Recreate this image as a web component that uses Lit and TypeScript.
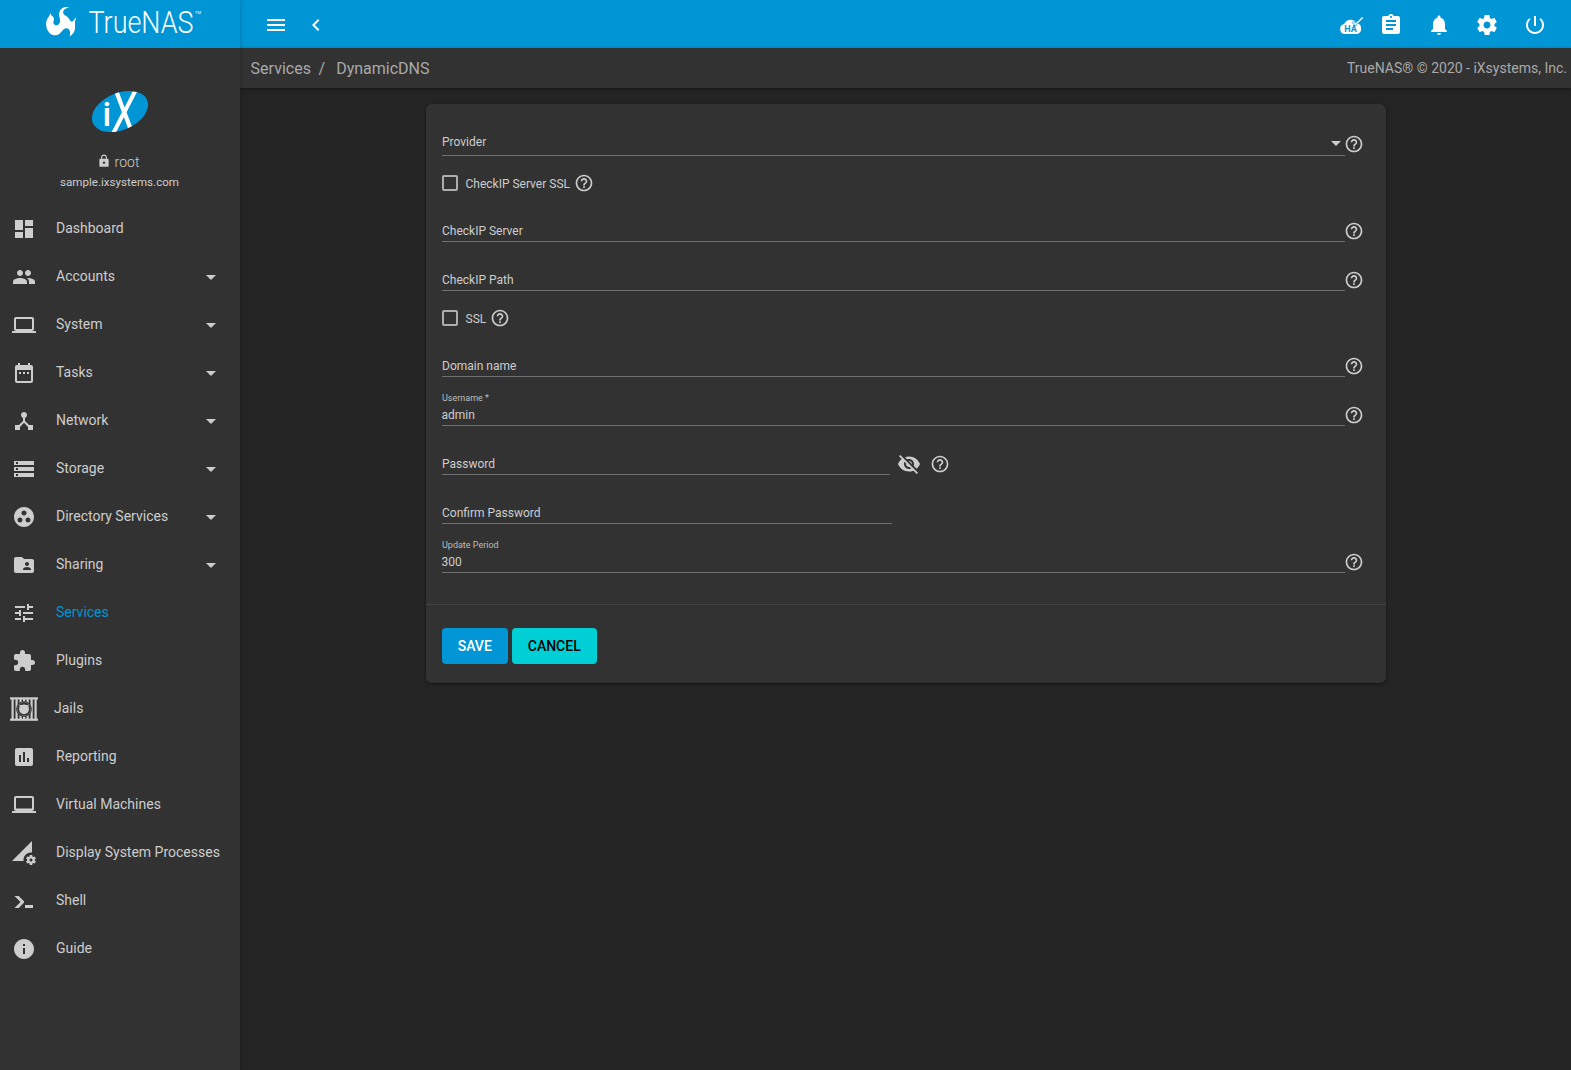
import { LitElement, html, css, svg, nothing } from "lit";
import { customElement, property } from "lit/decorators.js";
import { classMap } from "lit/directives/class-map.js";

const ICONS: Record<string, string> = {
  menu: "M3 18h18v-2H3v2zm0-5h18v-2H3v2zm0-7v2h18V6H3z",
  chevronLeft: "M15.41 7.41L14 6l-6 6 6 6 1.41-1.41L10.83 12z",
  assignment:
    "M19 3h-4.18C14.4 1.84 13.3 1 12 1c-1.3 0-2.4.84-2.82 2H5c-1.1 0-2 .9-2 2v14c0 1.1.9 2 2 2h14c1.1 0 2-.9 2-2V5c0-1.1-.9-2-2-2zm-7 0c.55 0 1 .45 1 1s-.45 1-1 1-1-.45-1-1 .45-1 1-1zm2 14H7v-2h7v2zm3-4H7v-2h10v2zm0-4H7V7h10v2z",
  bell: "M12 22c1.1 0 2-.9 2-2h-4c0 1.1.89 2 2 2zm6-6v-5c0-3.07-1.64-5.64-4.5-6.32V4c0-.83-.67-1.5-1.5-1.5s-1.5.67-1.5 1.5v.68C7.63 5.36 6 7.92 6 11v5l-2 2v1h16v-1l-2-2z",
  settings:
    "M19.43 12.98c.04-.32.07-.64.07-.98s-.03-.66-.07-.98l2.11-1.65c.19-.15.24-.42.12-.64l-2-3.46c-.12-.22-.39-.3-.61-.22l-2.49 1c-.52-.4-1.08-.73-1.69-.98l-.38-2.65C14.46 2.18 14.25 2 14 2h-4c-.25 0-.46.18-.49.42l-.38 2.65c-.61.25-1.17.59-1.69.98l-2.49-1c-.23-.09-.49 0-.61.22l-2 3.46c-.13.22-.07.49.12.64l2.11 1.65c-.04.32-.07.65-.07.98s.03.66.07.98l-2.11 1.65c-.19.15-.24.42-.12.64l2 3.46c.12.22.39.3.61.22l2.49-1c.52.4 1.08.73 1.69.98l.38 2.65c.03.24.24.42.49.42h4c.25 0 .46-.18.49-.42l.38-2.65c.61-.25 1.17-.59 1.69-.98l2.49 1c.23.09.49 0 .61-.22l2-3.46c.12-.22.07-.49-.12-.64l-2.11-1.65zM12 15.5c-1.93 0-3.5-1.57-3.5-3.5s1.57-3.5 3.5-3.5 3.5 1.57 3.5 3.5-1.57 3.5-3.5 3.5z",
  power:
    "M13 3h-2v10h2V3zm4.83 2.17l-1.42 1.42C17.99 7.86 19 9.81 19 12c0 3.87-3.13 7-7 7s-7-3.13-7-7c0-2.19 1.01-4.14 2.58-5.42L6.17 5.17C4.23 6.82 3 9.26 3 12c0 4.97 4.03 9 9 9s9-4.03 9-9c0-2.74-1.23-5.18-3.17-6.83z",
  dashboard: "M3 13h8V3H3v10zm0 8h8v-6H3v6zm10 0h8V11h-8v10zm0-18v6h8V3h-8z",
  group:
    "M16 11c1.66 0 2.99-1.34 2.99-3S17.66 5 16 5c-1.66 0-3 1.34-3 3s1.34 3 3 3zm-8 0c1.66 0 2.99-1.34 2.99-3S9.66 5 8 5C6.34 5 5 6.34 5 8s1.34 3 3 3zm0 2c-2.33 0-7 1.17-7 3.5V19h14v-2.5c0-2.33-4.67-3.5-7-3.5zm8 0c-.29 0-.62.02-.97.05 1.16.84 1.97 1.97 1.97 3.45V19h6v-2.5c0-2.33-4.67-3.5-7-3.5z",
  laptop:
    "M20 18c1.1 0 1.99-.9 1.99-2L22 6c0-1.1-.9-2-2-2H4c-1.1 0-2 .9-2 2v10c0 1.1.9 2 2 2H0v2h24v-2h-4zM4 6h16v10H4V6z",
  dateRange:
    "M9 11H7v2h2v-2zm4 0h-2v2h2v-2zm4 0h-2v2h2v-2zm2-7h-1V2h-2v2H8V2H6v2H5c-1.11 0-1.99.9-1.99 2L3 20c0 1.1.89 2 2 2h14c1.1 0 2-.9 2-2V6c0-1.1-.9-2-2-2zm0 16H5V9h14v11z",
  hub: "M17 16l-4-4V8.82C14.16 8.4 15 7.3 15 6c0-1.66-1.34-3-3-3S9 4.34 9 6c0 1.3.84 2.4 2 2.82V12l-4 4H3v5h5v-3.05l4-4.2 4 4.2V21h5v-5h-4z",
  storage: "M2 20h20v-4H2v4zm2-3h2v2H4v-2zM2 4v4h20V4H2zm4 3H4V5h2v2zm-4 7h20v-4H2v4zm2-3h2v2H4v-2z",
  groupWork:
    "M12 2C6.48 2 2 6.48 2 12s4.48 10 10 10 10-4.48 10-10S17.52 2 12 2zM8 17.5c-1.38 0-2.5-1.12-2.5-2.5s1.12-2.5 2.5-2.5 2.5 1.12 2.5 2.5-1.12 2.5-2.5 2.5zM9.5 8c0-1.38 1.12-2.5 2.5-2.5s2.5 1.12 2.5 2.5-1.12 2.5-2.5 2.5S9.5 9.38 9.5 8zm6.5 9.5c-1.38 0-2.5-1.12-2.5-2.5s1.12-2.5 2.5-2.5 2.5 1.12 2.5 2.5-1.12 2.5-2.5 2.5z",
  folderShared:
    "M20 6h-8l-2-2H4c-1.1 0-1.99.9-1.99 2L2 18c0 1.1.9 2 2 2h16c1.1 0 2-.9 2-2V8c0-1.1-.9-2-2-2zm-5 3c1.1 0 2 .9 2 2s-.9 2-2 2-2-.9-2-2 .9-2 2-2zm4 8h-8v-1c0-1.33 2.67-2 4-2s4 .67 4 2v1z",
  tune: "M3 17v2h6v-2H3zM3 5v2h10V5H3zm10 16v-2h8v-2h-8v-2h-2v6h2zM7 9v2H3v2h4v2h2V9H7zm14 4v-2H11v2h10zm-6-4h2V7h4V5h-4V3h-2v6z",
  extension:
    "M20.5 11H19V7c0-1.1-.9-2-2-2h-4V3.5C13 2.12 11.88 1 10.5 1S8 2.12 8 3.5V5H4c-1.1 0-1.99.9-1.99 2v3.8H3.5c1.49 0 2.7 1.21 2.7 2.7s-1.21 2.7-2.7 2.7H2V20c0 1.1.9 2 2 2h3.8v-1.5c0-1.49 1.21-2.7 2.7-2.7 1.49 0 2.7 1.21 2.7 2.7V22H17c1.1 0 2-.9 2-2v-4h1.5c1.38 0 2.5-1.12 2.5-2.5S21.88 11 20.5 11z",
  chart:
    "M19 3H5c-1.1 0-2 .9-2 2v14c0 1.1.9 2 2 2h14c1.1 0 2-.9 2-2V5c0-1.1-.9-2-2-2zM9 17H7v-7h2v7zm4 0h-2V7h2v10zm4 0h-2v-4h2v4z",
  computer:
    "M20 18c1.1 0 2-.9 2-2V5c0-1.1-.9-2-2-2H4c-1.1 0-2 .9-2 2v11c0 1.1.9 2 2 2H0v2h24v-2h-4zM4 5h16v10.500H4V5z",
  dataSetting:
    "M18.99 11.5c.34 0 .67.03 1 .07L20 0 0 20h11.560c-.04-.33-.07-.66-.07-1 0-4.14 3.36-7.5 7.5-7.5zm3.710 7.990c.02-.16.04-.32.04-.49 0-.17-.01-.33-.04-.49l1.060-.83c.09-.08.12-.21.06-.32l-1-1.730c-.06-.11-.19-.15-.31-.11l-1.240.5c-.26-.2-.54-.37-.85-.49l-.19-1.320c-.01-.12-.12-.21-.24-.21h-2c-.12 0-.23.09-.25.21l-.19 1.320c-.3.13-.59.29-.85.49l-1.240-.5c-.11-.04-.24 0-.31.11l-1 1.730c-.06.11-.04.24.06.32l1.060.83c-.02.16-.03.32-.03.49 0 .17.01.33.03.49l-1.060.83c-.09.08-.12.21-.06.32l1 1.730c.06.11.19.15.31.11l1.240-.5c.26.2.54.37.85.49l.19 1.320c.02.12.12.21.25.21h2c.12 0 .23-.09.24-.21l.19-1.320c.3-.13.59-.29.84-.49l1.250.5c.11.04.24 0 .31-.11l1-1.730c.06-.11.03-.24-.06-.32l-1.070-.83zm-3.710 1.010c-.83 0-1.500-.67-1.500-1.500s.67-1.500 1.500-1.500 1.500.67 1.500 1.500-.67 1.500-1.500 1.500z",
  shell: "M13 19v-3h8v3h-8zM8.500 13L2.470 7h4.240l4.960 4.960c.58.58.58 1.540 0 2.120L6.740 19H2.500l6-6z",
  info: "M12 2C6.480 2 2 6.480 2 12s4.480 10 10 10 10-4.480 10-10S17.520 2 12 2zm1 15h-2v-6h2v6zm0-8h-2V7h2v2z",
  lock: "M18 8h-1V6c0-2.760-2.240-5-5-5S7 3.240 7 6v2H6c-1.100 0-2 .9-2 2v10c0 1.100.9 2 2 2h12c1.100 0 2-.9 2-2V10c0-1.100-.9-2-2-2zm-6 9c-1.100 0-2-.9-2-2s.9-2 2-2 2 .9 2 2-.9 2-2 2zm3.100-9H8.900V6c0-1.710 1.390-3.100 3.100-3.100 1.710 0 3.100 1.390 3.100 3.100v2z",
  help: "M11 18h2v-2h-2v2zm1-16C6.480 2 2 6.480 2 12s4.480 10 10 10 10-4.480 10-10S17.520 2 12 2zm0 18c-4.410 0-8-3.590-8-8s3.590-8 8-8 8 3.590 8 8-3.590 8-8 8zm0-14c-2.210 0-4 1.790-4 4h2c0-1.100.9-2 2-2s2 .9 2 2c0 2-3 1.750-3 5h2c0-2.250 3-2.500 3-5 0-2.210-1.790-4-4-4z",
  dropDown: "M7 10l5 5 5-5z",
  eyeOff:
    "M12 7c2.76 0 5 2.24 5 5 0 .65-.13 1.26-.36 1.83l2.92 2.92c1.51-1.26 2.7-2.89 3.430-4.750-1.730-4.390-6-7.500-11-7.500-1.400 0-2.740.25-3.980.7l2.160 2.160C10.740 7.130 11.350 7 12 7zM2 4.270l2.280 2.280.46.46C3.080 8.300 1.780 10.020 1 12c1.730 4.390 6 7.500 11 7.500 1.550 0 3.030-.3 4.380-.84l.42.42L19.730 22 21 20.730 3.270 3 2 4.270zM7.530 9.800l1.550 1.550c-.05.21-.08.43-.08.65 0 1.660 1.340 3 3 3 .22 0 .44-.03.65-.08l1.550 1.550c-.67.33-1.410.53-2.200.53-2.760 0-5-2.240-5-5 0-.79.2-1.530.53-2.200zm4.310-.78l3.150 3.150.02-.16c0-1.660-1.340-3-3-3l-.17.01z",
};

@customElement("ix-icon")
class IxIcon extends LitElement {
  @property() name = "";
  static styles = css`
    :host { display: block; flex: none; width: 24px; height: 24px; }
    svg { display: block; width: 100%; height: 100%; fill: currentColor; }
  `;
  render() {
    return html`<svg viewBox="0 0 24 24"><path d=${ICONS[this.name] ?? ""}></path></svg>`;
  }
}

@customElement("form-field")
class FormField extends LitElement {
  @property() label = "";
  @property() value = "";
  @property() kind = "full";
  static styles = css`
    :host { display: flex; height: 49px; font-size: 12px; color: #cdcdcd; }
    .line { box-sizing: border-box; width: 903px; border-bottom: 1px solid #707070; display: flex; flex-direction: column; justify-content: flex-end; padding-bottom: 3px; }
    .float { font-size: 9px; line-height: 12px; color: #bdbdbd; padding-bottom: 4px; }
    .text { line-height: 14px; }
    .float + .text { margin-left: -0.5px; }
    .help { width: 20px; height: 20px; margin: 28px 0 0 -1px; }
    :host([kind="password"]) .line { width: 448px; }
    :host([kind="plain"]) .line { width: 450px; }
    :host([kind="password"]) .help { margin-left: 8.400px; }
    .eye { margin: 25.500px 0 0 7.200px; }
    :host([kind="select"]) { height: 52px; }
    :host([kind="select"]) .line { flex-direction: row; justify-content: space-between; align-items: flex-end; padding-bottom: 6px; }
    :host([kind="select"]) .help { margin-top: 30px; }
    .arrow { margin: 0 -3px -5.500px 0; }
  `;
  render() {
    return html`
      <div class="line">
        ${this.value ? html`<div class="float">${this.label}</div>` : nothing}
        <div class="text">${this.value || this.label}</div>
        ${this.kind === "select" ? html`<ix-icon class="arrow" name="dropDown"></ix-icon>` : nothing}
      </div>
      ${this.kind === "password" ? html`<ix-icon class="eye" name="eyeOff"></ix-icon>` : nothing}
      ${this.kind === "plain" ? nothing : html`<ix-icon class="help" name="help"></ix-icon>`}
    `;
  }
}

@customElement("check-field")
class CheckField extends LitElement {
  @property() label = "";
  static styles = css`
    :host { display: flex; align-items: center; height: 20px; padding: 17px 0 0; font-size: 12px; color: #cdcdcd; }
    .box { box-sizing: border-box; width: 16px; height: 16px; border: 2px solid #adadad; border-radius: 2px; }
    .text { margin-left: 7.500px; line-height: 16px; padding-top: 1px; }
    .help { width: 20px; height: 20px; margin-left: 4px; }
  `;
  render() {
    return html`<span class="box"></span><span class="text">${this.label}</span><ix-icon class="help" name="help"></ix-icon>`;
  }
}

interface NavItem { icon: string; label: string; menu?: boolean; active?: boolean; }

const NAV: NavItem[] = [
  { icon: "dashboard", label: "Dashboard" },
  { icon: "group", label: "Accounts", menu: true },
  { icon: "laptop", label: "System", menu: true },
  { icon: "dateRange", label: "Tasks", menu: true },
  { icon: "hub", label: "Network", menu: true },
  { icon: "storage", label: "Storage", menu: true },
  { icon: "groupWork", label: "Directory Services", menu: true },
  { icon: "folderShared", label: "Sharing", menu: true },
  { icon: "tune", label: "Services", active: true },
  { icon: "extension", label: "Plugins" },
  { icon: "jail", label: "Jails" },
  { icon: "chart", label: "Reporting" },
  { icon: "computer", label: "Virtual Machines" },
  { icon: "dataSetting", label: "Display System Processes" },
  { icon: "shell", label: "Shell" },
  { icon: "info", label: "Guide" },
];

const jailBars = [1.5, 5.5, 9.5, 13, 16.5, 20.5, 24.5];

@customElement("app-root")
class AppRoot extends LitElement {
  static styles = css`
    :host { display: block; font-family: Roboto, "Liberation Sans", sans-serif; }
    .page { display: grid; grid-template-columns: 240px 1fr; height: 1070px; background: #242424; overflow: hidden; }
    .side { background: #323232; box-shadow: 0 0 4px rgba(0, 0, 0, 0.25); z-index: 2; color: #cdcdcd; }
    .brand { height: 48px; background: #0095d5; }
    .brand svg, .badge svg { display: block; }
    .brandname { font-family: Roboto, sans-serif; font-weight: 300; font-size: 31px; fill: #fff; }
    .tm { font-family: Roboto, sans-serif; font-size: 4px; fill: #fff; }
    .badge { display: flex; flex-direction: column; align-items: center; height: 157px; }
    .badge svg { margin-top: 31px; }
    .mark { font-family: Roboto, sans-serif; font-weight: 400; fill: #fff; }
    .mark.i { font-weight: 500; }
    .user { display: flex; align-items: center; gap: 4px; font-size: 14px; line-height: 18px; margin-top: 10px; font-weight: 300; padding-right: 4px; }
    .user ix-icon { width: 14px; height: 14px; margin-top: -3px; }
    .host { font-size: 11.600px; line-height: 14px; margin-top: 4px; padding-right: 1px; }
    .item { display: flex; align-items: center; height: 48px; padding: 0 17px 0 12px; font-size: 14px; }
    .item .label { flex: 1; margin-left: 20px; padding-bottom: 2px; white-space: nowrap; }
    .item.jail { padding-left: 10px; }
    .item.jail .label { margin-left: 16px; }
    .item.active .label { color: #0095d5; }
    .main { display: flex; flex-direction: column; min-width: 0; }
    .top { display: flex; align-items: center; height: 48px; padding: 2px 24px 0 24px; box-sizing: border-box; background: #0095d5; color: #fff; }
    .top .back { margin-left: 16px; }
    .top .spacer { flex: 1; }
    .top .ha { margin-right: 16px; display: block; }
    .hatext { font-family: Roboto, sans-serif; font-weight: 700; font-size: 8.5px; fill: #0095d5; }
    .actions { display: flex; gap: 24px; }
    .crumbs { display: flex; align-items: center; justify-content: space-between; height: 40px; padding: 0 4px 0 10.600px; background: #323232; color: #a9a9a9; font-size: 16px; box-shadow: 0 1px 3px rgba(0, 0, 0, 0.4); }
    .crumbs .sep { margin: 0 11px 0 7.700px; }
    .copy { font-size: 14px; }
    .card { width: 960px; box-sizing: border-box; height: 579px; margin: 16px 0 0 186px; background: #323232; border-radius: 6px; box-shadow: 0 1px 3px rgba(0, 0, 0, 0.5); }
    .form { height: 500px; padding: 0 16px; border-bottom: 1px solid #424242; box-sizing: content-box; }
    .buttons { display: flex; gap: 4px; padding: 23px 16px; }
    .btn { font-family: inherit; border: 0; height: 36px; padding: 0 16px 0 15.500px; border-radius: 4px; font-size: 14px; font-weight: 500; line-height: 36px; white-space: nowrap; }
    .save { background: #0095d5; color: #fff; width: 66px; }
    .cancel { background: #00d0d6; color: #000; width: 85px; }
  `;

  private jail() {
    return html`<svg width="28" height="24" viewBox="0 0 28 24" fill="#cdcdcd">
      <rect x="0" y="0.300" width="28" height="2.200"></rect>
      <rect x="0" y="21.600" width="28" height="2.200"></rect>
      ${jailBars.map((x) => svg`<rect x=${x} y="2" width="2.200" height="20"></rect>`)}
      <circle cx="14" cy="12" r="7.800" fill="#323232"></circle>
      <circle cx="14" cy="12" r="6.800" fill="none" stroke="#6a6a6a" stroke-width="0.800"></circle>
      <circle cx="14" cy="12.300" r="4.900"></circle>
      <path d="M9.300 7.600l3.200 1.200h3l3.200-1.200-.6 4h-8.200z"></path>
    </svg>`;
  }

  render() {
    return html`<div class="page">
      <aside class="side">
        <div class="brand">
          <svg width="240" height="48" viewBox="0 0 240 48">
            <path fill="#fff" d="M68.800 7.500C65 6.300 61 8 59.600 11.500c-1.500 3.500.6 6.500.4 9.500-.1 2.600-1.700 4.400-3.700 4.200-2.500-.2-3.600-2.500-2.500-4.800.9-2-.4-4-2.800-5.400.1-.9-.3-1.600-.9-2.100.4 3.200-4 5-4 11 0 6.200 3.800 11.400 9.300 11.400 5.600 0 6.900-7 11-7 3 0 4.500 3.300 3.300 8.300 3.900-2.400 5.500-6 5.400-9.600-.1-3.200-.5-5.500 1.100-9.500-1.900 1-2.500 4.100-4.200 4.100-2 0-2.500-2.800-4.200-4.400-2-1.900-4.700-2.400-4.700-4.900 0-2.600 2.300-4.200 5.700-4.800z"></path>
            <text class="brandname" x="88.500" y="33" textLength="105" lengthAdjust="spacingAndGlyphs">TrueNAS</text>
            <text class="tm" x="195" y="14">TM</text>
          </svg>
        </div>
        <div class="badge">
          <svg width="90" height="64" viewBox="-15 -10 90 64">
            <defs><clipPath id="oval"><ellipse cx="30" cy="22.500" rx="29.500" ry="18.500" transform="rotate(-23 30 22.500)"></ellipse></clipPath></defs>
            <g clip-path="url(#oval)">
              <rect width="60" height="45" fill="#0095d5"></rect>
              <text class="mark i" font-size="34" transform="translate(12.500 37)">i</text>
              <text class="mark" font-size="58" transform="translate(20 43.500) skewX(-4) scale(.7 1)">X</text>
            </g>
          </svg>
          <div class="user"><ix-icon name="lock"></ix-icon><span>root</span></div>
          <div class="host">sample.ixsystems.com</div>
        </div>
        <nav>
          ${NAV.map(
            (n) => html`<div class=${classMap({ item: true, active: !!n.active, jail: n.icon === "jail" })}>
              ${n.icon === "jail" ? this.jail() : html`<ix-icon name=${n.icon}></ix-icon>`}
              <span class="label">${n.label}</span>
              ${n.menu ? html`<ix-icon name="dropDown"></ix-icon>` : nothing}
            </div>`
          )}
        </nav>
      </aside>
      <div class="main">
        <header class="top">
          <ix-icon name="menu"></ix-icon>
          <ix-icon class="back" name="chevronLeft"></ix-icon>
          <span class="spacer"></span>
          <svg class="ha" width="24" height="24" viewBox="0 0 24 24">
            <path fill="#fff" d="M6 21a5 5 0 0 1-.8-9.900A7 7 0 0 1 17.500 10a5.600 5.600 0 0 1 .2 11z"></path>
            <path fill="none" stroke="#0095d5" stroke-width="2.600" d="M13.500 8.500l3 3 6.800-7"></path>
            <path fill="none" stroke="#fff" stroke-width="1.400" d="M13.500 8.500l3 3 7.200-7"></path>
            <text class="hatext" x="5.300" y="18.500" textLength="12.500" lengthAdjust="spacingAndGlyphs">HA</text>
          </svg>
          <div class="actions">
            <ix-icon name="assignment"></ix-icon>
            <ix-icon name="bell"></ix-icon>
            <ix-icon name="settings"></ix-icon>
            <ix-icon name="power"></ix-icon>
          </div>
        </header>
        <div class="crumbs">
          <div><span>Services</span><span class="sep">/</span><span>DynamicDNS</span></div>
          <div class="copy">TrueNAS® © 2020 - iXsystems, Inc.</div>
        </div>
        <section class="card">
          <div class="form">
            <form-field kind="select" label="Provider"></form-field>
            <check-field label="CheckIP Server SSL"></check-field>
            <form-field label="CheckIP Server"></form-field>
            <form-field label="CheckIP Path"></form-field>
            <check-field label="SSL"></check-field>
            <form-field label="Domain name"></form-field>
            <form-field label="Username *" value="admin"></form-field>
            <form-field kind="password" label="Password"></form-field>
            <form-field kind="plain" label="Confirm Password"></form-field>
            <form-field label="Update Period" value="300"></form-field>
          </div>
          <div class="buttons">
            <button class="btn save">SAVE</button>
            <button class="btn cancel">CANCEL</button>
          </div>
        </section>
      </div>
    </div>`;
  }
}
